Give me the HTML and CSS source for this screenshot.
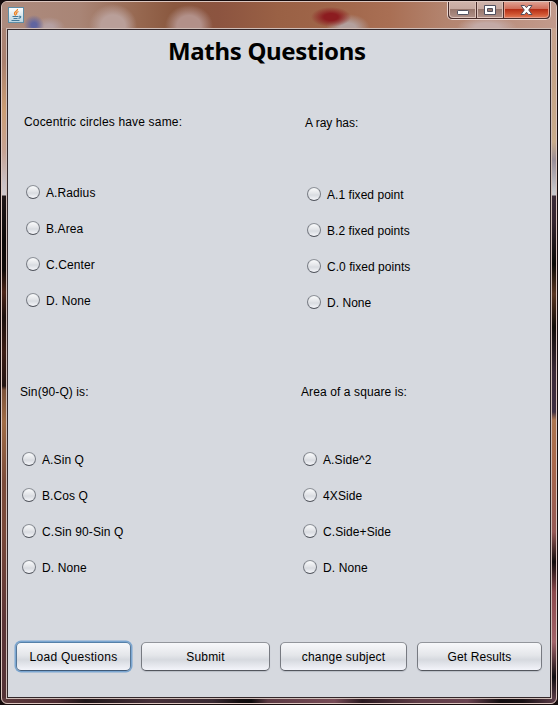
FILE: index.html
```html
<!DOCTYPE html>
<html lang="en">
<head>
<meta charset="utf-8">
<title>Maths Questions</title>
<link rel="stylesheet" href="styles.css">
</head>
<body>
<div class="window">
  <div class="frame">
    <header class="titlebar">
      <svg class="java" width="16" height="16" viewBox="0 0 16 16">
        <defs><linearGradient id="jg" x2="0" y2="1"><stop offset="0" stop-color="#fff"/><stop offset="1" stop-color="#b9d3df"/></linearGradient></defs>
        <rect x=".5" y=".5" width="15" height="15" fill="url(#jg)" stroke="#5d8da6"/>
        <path d="M9.5 2C10 4 6 4.500 6.500 6.500Q6.700 7.500 7.700 8.500M10.500 4.500C8 5.500 8 6.500 9 7.500" fill="none" stroke="#ee8120" stroke-width="1.300"/>
        <path d="M4.500 9.500H10.500M5.500 11.500H9.500M3.500 13.500H11.500M11 9.200Q13.500 9 12.500 10.500L10.500 11.500" fill="none" stroke="#43799a" stroke-width="1.100"/>
      </svg>
      <div class="controls">
        <button class="ctl min" aria-label="Minimize"><svg width="12" height="6" viewBox="0 0 12 6"><rect x=".5" y=".5" width="11" height="4" rx=".7" fill="#fff" stroke="#50505e"/></svg></button>
        <button class="ctl max" aria-label="Maximize"><svg width="12" height="10" viewBox="0 0 12 10"><path d="M.5.5H11.500V9.500H.5ZM3.500 3.500V6.500H8.500V3.500Z" fill="#fff" fill-rule="evenodd" stroke="#50505e"/></svg></button>
        <button class="ctl close" aria-label="Close"><svg width="13" height="10" viewBox="0 0 13 10"><path d="M1 .5H4.500L6.500 2.700 8.500.5H12L8.700 5 12 9.500H8.500L6.500 7.300 4.500 9.500H1L4.300 5Z" fill="#fff" stroke="#54505e"/></svg></button>
      </div>
    </header>
    <main class="pane">
      <h1>Maths Questions</h1>
      <div class="quiz">
        <section class="question q1">
          <p>Cocentric circles have same:</p>
          <label><input type="radio" name="a">A.Radius</label>
          <label><input type="radio" name="a">B.Area</label>
          <label><input type="radio" name="a">C.Center</label>
          <label><input type="radio" name="a">D. None</label>
        </section>
        <section class="question q2">
          <p>A ray has:</p>
          <label><input type="radio" name="b">A.1 fixed point</label>
          <label><input type="radio" name="b">B.2 fixed points</label>
          <label><input type="radio" name="b">C.0 fixed points</label>
          <label><input type="radio" name="b">D. None</label>
        </section>
        <section class="question q3">
          <p>Sin(90-Q) is:</p>
          <label><input type="radio" name="c">A.Sin Q</label>
          <label><input type="radio" name="c">B.Cos Q</label>
          <label><input type="radio" name="c">C.Sin 90-Sin Q</label>
          <label><input type="radio" name="c">D. None</label>
        </section>
        <section class="question q4">
          <p>Area of a square is:</p>
          <label><input type="radio" name="d">A.Side^2</label>
          <label><input type="radio" name="d">4XSide</label>
          <label><input type="radio" name="d">C.Side+Side</label>
          <label><input type="radio" name="d">D. None</label>
        </section>
      </div>
      <div class="actions">
        <button class="btn focused">Load Questions</button>
        <button class="btn">Submit</button>
        <button class="btn">change subject</button>
        <button class="btn">Get Results</button>
      </div>
    </main>
  </div>
</div>
</body>
</html>
```
FILE: styles.css
```css
* { box-sizing: border-box; }
body {
  margin: 0;
  background: #150b0c;
  font: 12px/16px "Liberation Sans", Arial, sans-serif;
  letter-spacing: .1px;
  color: #000;
}
.window {
  height: 705px;
  padding: 1px;
}
.frame {
  display: flex;
  flex-direction: column;
  height: 703px;
  padding: 0 5px 5px;
  border: 1px solid #dcc6bf;
  border-radius: 6px;
  background:
    linear-gradient(90deg, #5c393b, #4c2b31 10%, #1f1619 15%, #473039 27%, #3a2a33 38%, #130d0f 43%, #0e0b0d 45%, #5c3a43 48%, #774b56 60%, #2a1920 65%, #5e3c46 75%, #6a4350 84%, #120c0f 90%, #181014 94%, #5c3c48) 0 100% / 100% 5px no-repeat,
    linear-gradient(#a9877a, #a9806f 60px, #cb9d74 108px, #c6a395 150px, #c9c0c4 180px, #cfc8cc 193px, #1f1618 194px, #0c0808 240px, #0f0908 268px, #4c2519 290px, #1b0f0d 315px, #3c1d15 350px, #221412 384px, #7c523a 388px, #a06c46 420px, #7b4b3a 480px, #794839 530px, #5c3536 620px, #533236) 0 0 / 5px 100% no-repeat,
    linear-gradient(#c9a294, #c6a488 70px, #c9ac8c 140px, #9a8e98 158px, #c8c8cc 190px, #c8c8cc 193px, #3c2c38 194px, #34252f 220px, #0b0906 262px, #5a3522 292px, #120c08 325px, #3c2b38 370px, #3f3042 410px, #ac7650 418px, #aa694c 460px, #955955 530px, #120c0c 560px, #8c4a4c 590px, #a2646a 640px, #100c10 675px, #684450) 100% 0 / 5px 100% no-repeat,
    #c9a294;
}
.titlebar {
  display: flex;
  justify-content: space-between;
  height: 26px;
  margin: 0 -5px;
  padding: 0 5px 0 6px;
  border-radius: 5px 5px 0 0;
  background:
    radial-gradient(ellipse 20px 10px at 329px 15px, #8c1c20 35%, transparent),
    radial-gradient(ellipse 22px 14px at 346px 26px, #b3a09d 35%, transparent),
    radial-gradient(ellipse 10px 10px at 32px 23px, #6065a0 25%, transparent),
    radial-gradient(ellipse 16px 10px at 47px 25px, #b5a0a2 25%, transparent),
    radial-gradient(ellipse 24px 22px at 111px 24px, #b99f99 50%, transparent),
    radial-gradient(ellipse 24px 21px at 187px 24px, #b29089 50%, transparent),
    radial-gradient(ellipse 30px 10px at 485px 25px, #c3aaa6 40%, transparent),
    linear-gradient(90deg, #ad8b7e, #a98576 14%, #96674f 25%, #8a583f 31%, #8c5440 39%, #9a6145 50%, #a0664a 60%, #a96f54 70%, #b3846f 80%, #c29a8c);
}
.java { display: block; margin-top: 5px; }
.controls {
  display: flex;
  width: 104px;
  height: 18px;
  border: 1px solid #ead5cf;
  border-top: 0;
  border-radius: 0 0 5px 5px;
  background: #4a2e2c;
  padding: 0 1px 1px;
  gap: 1px;
}
.ctl {
  display: flex;
  align-items: center;
  justify-content: center;
  padding: 0;
  border: 1px solid #dcc2ba;
  border-top: 0;
  background: linear-gradient(#cfb3aa, #c6a9a0 47%, #98776d 50%, #ae8f86);
}
.min { width: 27px; border-radius: 0 0 0 4px; padding-top: 6px; }
.max { width: 26px; padding-top: 1px; }
.close {
  flex: 1;
  padding-top: 1px;
  border-color: #e79b88;
  border-radius: 0 0 4px 0;
  background: linear-gradient(#dfa091, #cf6c58 47%, #b62f17 50%, #cf5230 80%, #dc7350);
}
.pane {
  flex: 1;
  margin-top: 1px;
  border: 1px solid #33272a;
  outline: 1px solid #cfbdb7;
  background: #d6d9df;
}
h1 {
  height: 42px;
  margin: 0;
  padding-left: 160px;
  font: bold 24px/42px "Noto Sans", "Open Sans", sans-serif;
  letter-spacing: -.32px;
  white-space: nowrap;
}
.quiz {
  display: grid;
  grid-template: 270px 270px / 281px 1fr;
}
.question {
  display: flex;
  flex-direction: column;
  align-items: flex-start;
  gap: 20px;
  padding: 42px 0 0 12px;
}
.question p { margin: 0 0 31px; letter-spacing: .1px; }
.q1, .q2 { padding-left: 16px; }
.q1 p { margin-bottom: 34px; letter-spacing: .17px; }
.q2 { padding-top: 43px; letter-spacing: .04px; }
.q2 p { margin-bottom: 35px; letter-spacing: 0; }
label {
  display: flex;
  align-items: flex-start;
  gap: 6px;
  padding-left: 2px;
  height: 16px;
  line-height: 18px;
}
input {
  appearance: none;
  width: 14px;
  height: 14px;
  margin: 1px 0 0;
  border: 1px solid;
  border-color: #8e9299 #777b83 #4e525a;
  border-radius: 50%;
  background: linear-gradient(#fafbfc, #e0e2e6 50%, #d8dbe0 58%, #f5f6fa);
}
.actions {
  display: flex;
  gap: 10px;
  padding: 30px 8px 0;
}
.btn {
  height: 29px;
  padding: 1px 0 0;
  border: 1px solid;
  border-color: #92959b #777a81 #53565d;
  border-radius: 5px;
  background: linear-gradient(#f7f8fa, #e4e6ea 45%, #d6d9df 62%, #f3f4fa);
  font: inherit;
  letter-spacing: .2px;
  color: #000;
  box-shadow: 0 1px 1px #b9bdc5;
}
.btn:nth-child(1) { width: 115px; letter-spacing: .27px; }
.btn:nth-child(2) { width: 129px; }
.btn:nth-child(3) { width: 127px; }
.btn:nth-child(4) { width: 125px; letter-spacing: .1px; }
.btn.focused {
  border-color: #5580a8 #557697 #405a78;
  box-shadow: 0 0 0 1.500px #7ba6d1;
}
```
